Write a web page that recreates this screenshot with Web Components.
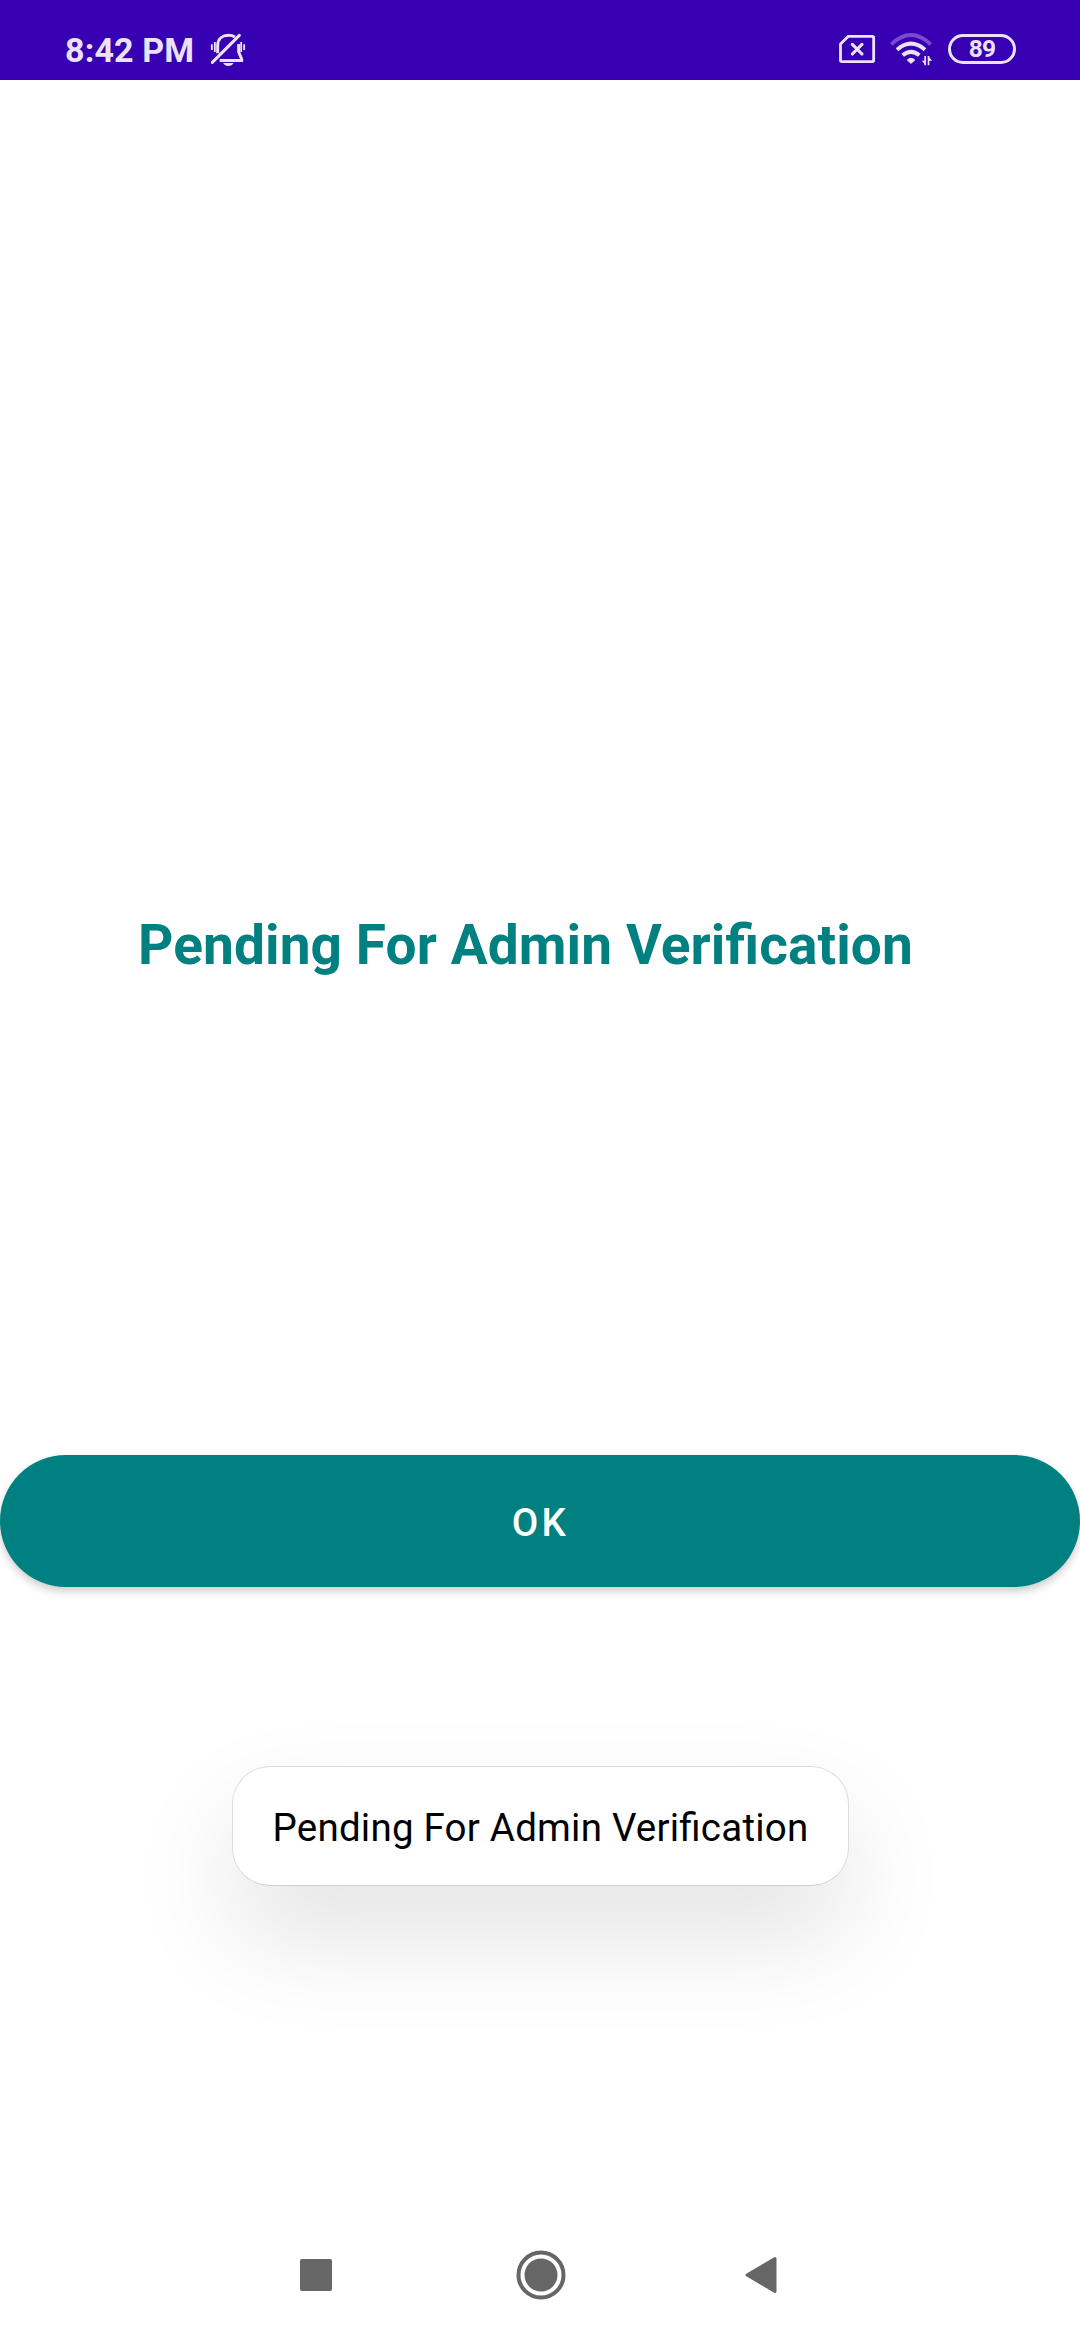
<!DOCTYPE html>
<html lang="en">
<head>
<meta charset="utf-8">
<title>Verification</title>
<style>
html,body{margin:0;padding:0;background:#fff}
body{font-family:Roboto,sans-serif;width:1080px;height:2340px;overflow:hidden}
</style>
</head>
<body>
<verify-screen></verify-screen>
<script>
const define=(name,html)=>customElements.define(name,class extends HTMLElement{
  constructor(){super();this.attachShadow({mode:'open'}).innerHTML=html;}
});

define('bell-off-icon',`<style>:host{display:block;width:36px;height:34px}svg{display:block}</style>
<svg width="36" height="34" viewBox="480 39 108 102" fill="none" stroke="#ece2f8" stroke-width="9">
<path d="M487 127L568 46" stroke-linecap="round"/>
<path d="M503 100V77C503 54 520 46 535 46C543 46 550 48 555 51"/>
<path d="M566 72V96L575 117V121.500H509"/>
<path d="M519 129H551C547 135 542 138 535 138S523 135 519 129Z" fill="#ece2f8" stroke="none"/>
<path d="M485.500 73V90M494.500 66V96M573.500 66V96M582.500 73V90" stroke-width="5.500"/>
</svg>`);

define('sim-icon',`<style>:host{display:block;width:38px;height:30px}svg{display:block}</style>
<svg width="38" height="30" viewBox="54 42 114 90" fill="none" stroke="#ece2f8">
<path d="M85 49H157Q161 49 161 53V121Q161 125 157 125H66Q61.500 125 61.500 121V72Z" stroke-width="8.500" stroke-linejoin="round"/>
<path d="M97 73L126 102M126 73L97 102" stroke-width="9.500" stroke-linecap="round"/>
</svg>`);

define('wifi-icon',`<style>:host{display:block;width:44px;height:34px}svg{display:block}</style>
<svg width="44" height="34" viewBox="207 39 132 102" fill="none" stroke="#ece2f8" stroke-width="12">
<path d="M214 76Q273 20 332 76" stroke="#7a4bcb"/>
<path d="M231 92Q273 56 315 92"/>
<path d="M248 109Q273 88 298 109"/>
<path d="M263 123Q273 114 283 123L273 132Z" fill="#ece2f8" stroke="#ece2f8" stroke-width="4" stroke-linejoin="round"/>
<path d="M315.500 111V139M325.500 111V139" stroke-width="5"/>
<path d="M305 125H317V138ZM324 111L337 125H324Z" fill="#ece2f8" stroke="none"/>
</svg>`);

define('battery-pill',`<style>:host{display:flex;box-sizing:border-box;width:68px;height:30px;border:3px solid #ece2f8;border-radius:15px;align-items:center;justify-content:center;color:#ece2f8;font:700 24.5px/24px Roboto,sans-serif;letter-spacing:-.8px}</style><slot></slot>`);

define('status-bar',`<style>
:host{display:flex;box-sizing:border-box;height:80px;background:#3700b3;padding:20px 64px 0 65px;justify-content:space-between;align-items:flex-start}
div{display:flex;align-items:center;height:60px}
span{display:block;width:129px;font:700 34px/60px Roboto,sans-serif;color:#ece2f8;white-space:nowrap;letter-spacing:.15px}
bell-off-icon{margin-left:16px}wifi-icon{margin-left:13px}battery-pill{margin-left:15px}
.r{height:58px}
</style><div><span><slot></slot></span><bell-off-icon></bell-off-icon></div>
<div class="r"><sim-icon></sim-icon><wifi-icon></wifi-icon><battery-pill>89</battery-pill></div>`);

define('page-title',`<style>:host{display:block;font:700 55px/64px Roboto,sans-serif;letter-spacing:.1px;font-feature-settings:"liga" 1;color:#008080;white-space:nowrap}</style><slot></slot>`);

define('pill-button',`<style>:host{display:block}
button{display:block;box-sizing:border-box;width:100%;height:132px;border:0;border-radius:66px;background:#008080;color:#fff;font:500 38.5px/45px Roboto,sans-serif;letter-spacing:3.44px;padding:3px 0 0 1px;box-shadow:0 5px 8px rgba(0,0,0,.17),0 1px 5px rgba(0,0,0,.05)}
</style><button><slot></slot></button>`);

define('toast-message',`<style>:host{display:flex;box-sizing:border-box;width:617px;height:120px;border:1px solid #dcdcdc;border-bottom-color:#cecece;border-radius:38px;background:#fff;align-items:center;justify-content:center;padding-top:4px;font:400 38.5px/46px Roboto,sans-serif;letter-spacing:.22px;font-feature-settings:"liga" 1;color:#000;white-space:nowrap;box-shadow:0 50px 105px rgba(0,0,0,.114)}</style><slot></slot>`);

define('nav-bar',`<style>:host{display:flex;padding-left:299px;height:50px;align-items:center}svg{display:block}
.s{margin-right:182.5px}.b{margin-left:179px}</style>
<svg class="s" width="34" height="38" viewBox="0 0 34 38" fill="#666"><rect x="1" y="3" width="32" height="32" rx="2"/></svg>
<svg width="50" height="50" viewBox="0 0 50 50"><circle cx="25" cy="25" r="22.500" fill="none" stroke="#666" stroke-width="4"/><circle cx="25" cy="25" r="16.500" fill="#666"/></svg>
<svg class="b" width="33" height="38" viewBox="0 0 33 38"><path d="M2 19L30 2.500V35.500Z" fill="#666" stroke="#666" stroke-width="3" stroke-linejoin="round"/></svg>`);

define('verify-screen',`<style>
:host{display:flex;flex-direction:column;height:2340px;background:#fff}
page-title{margin:833px 0 0 138px}
pill-button{margin-top:478px}
toast-message{margin:179px 0 0 232px}
nav-bar{margin-top:364px}
</style>
<status-bar>8:42 PM</status-bar>
<page-title>Pending For Admin Verification</page-title>
<pill-button>OK</pill-button>
<toast-message>Pending For Admin Verification</toast-message>
<nav-bar></nav-bar>`);
</script>
</body>
</html>
